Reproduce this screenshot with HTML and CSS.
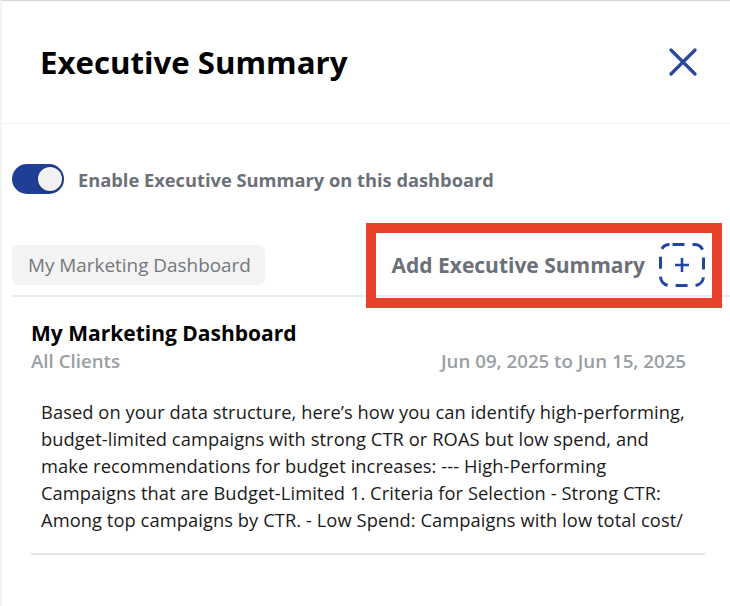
FILE: index.html
```html
<!DOCTYPE html>
<html lang="en">
<head>
  <meta charset="UTF-8" />
  <meta name="viewport" content="width=device-width, initial-scale=1.0" />
  <title>Executive Summary</title>
  <link rel="stylesheet" href="styles.css">
</head>
<body>
  <div class="panel">
    <div class="header">
      <h2>Executive Summary</h2>
      <button class="close" title="Close">
        <svg width="28" height="28" viewBox="0 0 28 28">
          <path d="M2 2 L26 26 M26 2 L2 26" stroke="#2a479d" stroke-width="3.2" stroke-linecap="round" fill="none"/>
        </svg>
      </button>
    </div>

    <label class="toggle-row">
      <span class="toggle on"><span class="knob"></span></span>
      <span class="toggle-label">Enable Executive Summary on this dashboard</span>
    </label>

    <div class="summary-bar">
      <span class="chip">My Marketing Dashboard</span>
      <div class="add-btn">
        <span>Add Executive Summary</span>
        <svg class="add-icon" width="46" height="44" viewBox="0 0 46 44">
          <rect x="1.5" y="1.5" width="43" height="41" rx="9" fill="none" stroke="#2246a3" stroke-width="3" stroke-dasharray="12 8" stroke-dashoffset="-3"/>
          <path d="M23 15 V29 M16 22 H30" stroke="#2246a3" stroke-width="2.6" fill="none"/>
        </svg>
      </div>
    </div>

    <div class="card">
      <h3>My Marketing Dashboard</h3>
      <div class="meta">
        <span>All Clients</span>
        <span>Jun 09, 2025 to Jun 15, 2025</span>
      </div>
      <p class="summary-text">Based on your data structure, here’s how you can identify high-performing, budget-limited campaigns with strong CTR or ROAS but low spend, and make recommendations for budget increases: --- High-Performing Campaigns that are Budget-Limited 1. Criteria for Selection - Strong CTR: Among top campaigns by CTR. - Low Spend: Campaigns with low total cost/</p>
    </div>
  </div>
</body>
</html>
```

FILE: styles.css
```css
body {
  margin: 0;
  font-family: "Open Sans", Lato, sans-serif;
  background: #fff;
  color: #111;
}
.panel {
  height: 605px;
  border-top: 1px solid #d4d4d4;
  border-left: 2px solid #f4f4f4;
  overflow: hidden;
}
.header {
  height: 122px;
  display: flex;
  align-items: center;
  justify-content: space-between;
  padding: 0 33px 0 38px;
  border-bottom: 1px solid #f3f3f3;
}
.header h2 {
  margin: 0;
  font-size: 31.2px;
  font-weight: 700;
  color: #000;
}
.close {
  background: none;
  border: none;
  padding: 0;
  cursor: pointer;
  display: flex;
}
.toggle-row {
  display: flex;
  align-items: center;
  gap: 14px;
  margin-top: 40px;
  padding-left: 10px;
}
.toggle {
  position: relative;
  width: 52px;
  height: 30px;
  border-radius: 15px;
  background: #1f3f97;
}
.knob {
  position: absolute;
  top: 3px;
  right: 2px;
  width: 24px;
  height: 24px;
  border-radius: 50%;
  background: #f2f2f2;
  box-shadow: 0 1px 3px rgba(0,0,0,0.35);
}
.toggle-label {
  font-size: 18.3px;
  font-weight: 700;
  color: #6b7079;
}
.summary-bar {
  display: flex;
  align-items: center;
  justify-content: space-between;
  margin: 49px 0 0 10px;
  padding: 0 25px 8px 0;
  border-bottom: 2px solid #ececec;
}
.chip {
  background: #f3f3f3;
  border-radius: 7px;
  padding: 7px 14px 7px 16px;
  font-size: 18.9px;
  color: #73777d;
}
.add-btn {
  position: relative;
  display: flex;
  align-items: center;
  gap: 14px;
  font-size: 21px;
  font-weight: 700;
  color: #6b7079;
}
/* highlight frame around the add action */
.add-btn::before {
  content: "";
  position: absolute;
  left: -25px;
  right: -17px;
  top: -20px;
  bottom: -21px;
  border: 10px solid #e8432a;
}
.add-icon {
  display: block;
}
.card {
  margin: 0 25px 0 29px;
  padding-top: 22px;
  border-bottom: 2px solid #e6e6e6;
}
.card h3 {
  margin: 0;
  font-size: 21px;
  font-weight: 700;
  color: #000;
}
.meta {
  display: flex;
  justify-content: space-between;
  padding-right: 19px;
  margin-top: 1px;
  font-size: 18.7px;
  font-weight: 600;
  color: #9a9ea5;
}
.summary-text {
  margin: 25px 12px 20px 10px;
  font-size: 18.3px;
  letter-spacing: 0.08px;
  line-height: 27px;
  color: #1a1a1a;
}
```
